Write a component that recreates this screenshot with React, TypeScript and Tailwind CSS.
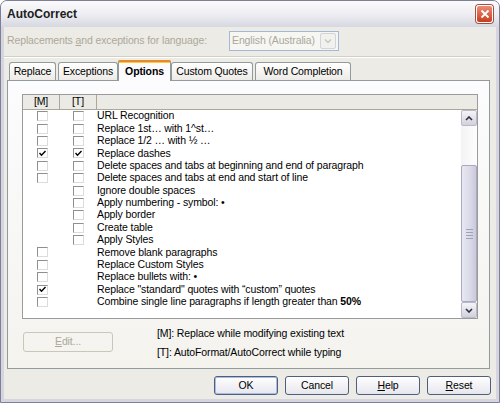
import React from 'react';

type Row = { m?: boolean; t?: boolean; label: React.ReactNode };

const rows: Row[] = [
  { m: false, t: false, label: 'URL Recognition' },
  { m: false, t: false, label: 'Replace 1st… with 1^st…' },
  { m: false, t: false, label: 'Replace 1/2 … with ½ …' },
  { m: true, t: true, label: 'Replace dashes' },
  { m: false, t: false, label: 'Delete spaces and tabs at beginning and end of paragraph' },
  { m: false, t: false, label: 'Delete spaces and tabs at end and start of line' },
  { t: false, label: 'Ignore double spaces' },
  { t: false, label: 'Apply numbering - symbol: •' },
  { t: false, label: 'Apply border' },
  { t: false, label: 'Create table' },
  { t: false, label: 'Apply Styles' },
  { m: false, label: 'Remove blank paragraphs' },
  { m: false, label: 'Replace Custom Styles' },
  { m: false, label: 'Replace bullets with: •' },
  { m: true, label: 'Replace "standard" quotes with “custom” quotes' },
  { m: false, label: <>Combine single line paragraphs if length greater than <b>50%</b></> },
];

function Check({ checked }: { checked: boolean }) {
  return (
    <span className="w-[11px] h-[10px] border border-t-[#8e8f8f] border-l-[#8e8f8f] border-r-[#dcdcdc] border-b-[#dcdcdc] bg-white flex items-center justify-center">
      {checked && (
        <svg width="7" height="7" viewBox="0 0 7 7">
          <path d="M0.5 3 L2.5 5.2 L6.5 1" stroke="#000" strokeWidth="1.4" fill="none" />
        </svg>
      )}
    </span>
  );
}

function Tab({ label, w, active, ml }: { label: string; w: string; active?: boolean; ml?: string }) {
  if (active) {
    return (
      <div className={`${w} h-[21px] -mb-px relative z-10 bg-[#fcfcfe] border border-b-0 border-[#919b9c] rounded-t-[3px] flex flex-col`}>
        <div className="h-[2px] bg-[#e68b2c] rounded-t-[2px] -mx-px -mt-px" />
        <div className="h-px bg-[#ffc83c]" />
        <div className="flex-1 flex items-center justify-center font-bold">{label}</div>
      </div>
    );
  }
  return (
    <div className={`${w} ${ml ?? ''} h-[18px] bg-gradient-to-b from-white to-[#ecebe6] border border-b-0 border-[#919b9c] rounded-t-[3px] flex items-center justify-center`}>
      {label}
    </div>
  );
}

function Btn({ children, isDefault }: { children: React.ReactNode; isDefault?: boolean }) {
  return (
    <div className={`w-[64px] h-[19px] rounded-[3px] border border-[#4f5e7c] bg-gradient-to-b from-white to-[#e6e6ee] flex items-center justify-center ${isDefault ? 'shadow-[inset_0_0_0_1px_#a9bde3]' : ''}`}>
      {children}
    </div>
  );
}

export default function App() {
  return (
    <div className="w-[500px] h-[403px] flex flex-col bg-[#d5d5e0] border border-[#7e7e96] rounded-t-[7px] overflow-hidden text-[10.5px] tracking-[-0.12px] text-black whitespace-nowrap" style={{ fontFamily: '"Liberation Sans", Arial, sans-serif' }}>
      {/* Title bar */}
      <div className="h-[26px] shrink-0 bg-gradient-to-b from-[#fbfbfc] via-[#eeeef3] to-[#d7d7e1] flex items-center pl-[6px] pr-[6px]">
        <span className="font-bold text-[12px] tracking-normal text-[#202020]">AutoCorrect</span>
        <div className="ml-auto w-[17px] h-[18px] rounded-[3px] border border-white bg-gradient-to-b from-[#ec8c74] to-[#c8391a] flex items-center justify-center shadow-[0_0_0_1px_#a05040]">
          <svg width="10" height="10" viewBox="0 0 10 10">
            <path d="M1.5 1.5 L8.5 8.5 M8.5 1.5 L1.5 8.5" stroke="#fff" strokeWidth="1.8" />
          </svg>
        </div>
      </div>

      {/* Body */}
      <div className="flex-1 mx-[3px] mb-[3px] bg-[#ecebe6] flex flex-col pl-[3px] pr-[5px]">
        {/* Language row */}
        <div className="mt-[4px] h-[20px] flex items-center">
          <span className="w-[222px] text-[#aca899]">
            Replacements <span className="underline">a</span>nd exceptions for language:
          </span>
          <div className="w-[110px] h-[20px] border border-[#a6b8d4] bg-[#f6f6f3] flex items-center pl-[2px] pr-[2px]">
            <span className="flex-1 text-[#aca899]">English (Australia)</span>
            <div className="w-[16px] h-[16px] border border-[#d3d3d8] bg-[#f1f1ef] rounded-[2px] flex items-center justify-center">
              <svg width="8" height="6" viewBox="0 0 8 6">
                <path d="M1 1.5 L4 4.5 L7 1.5" stroke="#c9c7ba" strokeWidth="1.5" fill="none" />
              </svg>
            </div>
          </div>
        </div>

        {/* Separator */}
        <div className="mt-[5px] h-[2px] border-t border-[#d0d0c4] border-b border-b-white -ml-[3px]" />

        {/* Tabs */}
        <div className="mt-[1px] h-[21px] flex items-end pl-[2px]">
          <Tab label="Replace" w="w-[47px]" />
          <Tab label="Exceptions" w="w-[60px]" ml="ml-[2px]" />
          <Tab label="Options" w="w-[53px]" active />
          <Tab label="Custom Quotes" w="w-[82px]" />
          <Tab label="Word Completion" w="w-[96px]" ml="ml-[2px]" />
        </div>

        {/* Tab page */}
        <div className="h-[289px] w-[483px] border border-[#919b9c] bg-gradient-to-b from-[#fcfcfe] to-[#f4f3ee] flex flex-col pl-[14px]">
          {/* List box */}
          <div className="mt-[13px] w-[456px] h-[225px] border border-[#9b9b9b] bg-white flex flex-col">
            <div className="h-[15px] shrink-0 flex bg-[#ebeae5] border-b border-[#aca899]">
              <div className="w-[37px] border-r border-[#aca899] flex items-center justify-center">[M]</div>
              <div className="w-[37px] border-r border-[#aca899] flex items-center justify-center">[T]</div>
              <div className="flex-1" />
            </div>
            <div className="flex-1 flex min-h-0">
              <div className="flex-1 overflow-hidden">
                {rows.map((r, i) => (
                  <div key={i} className="h-[12.4px] flex items-center">
                    <div className="w-[37px] pl-[14px] flex">{r.m !== undefined && <Check checked={r.m} />}</div>
                    <div className="w-[37px] pl-[13px] flex">{r.t !== undefined && <Check checked={r.t} />}</div>
                    <span>{r.label}</span>
                  </div>
                ))}
              </div>
              {/* Scrollbar */}
              <div className="w-[16px] flex flex-col bg-gradient-to-r from-[#f3f3f5] to-[#fdfdfd]">
                <div className="h-[16px] rounded-[2px] border border-[#b9b9cc] bg-gradient-to-b from-[#f4f4f8] to-[#d1d1de] flex items-center justify-center">
                  <svg width="8" height="5" viewBox="0 0 8 5">
                    <path d="M1 4 L4 1 L7 4" stroke="#2f2f3f" strokeWidth="1.6" fill="none" />
                  </svg>
                </div>
                <div className="h-[39px]" />
                <div className="flex-1 rounded-[2px] border border-[#a9a9c0] bg-gradient-to-r from-[#e8e8f2] via-[#dcdcea] to-[#c9c9db] flex flex-col items-center justify-center gap-[2px]">
                  <div className="w-[7px] h-px bg-[#a0a0b8]" />
                  <div className="w-[7px] h-px bg-[#a0a0b8]" />
                  <div className="w-[7px] h-px bg-[#a0a0b8]" />
                  <div className="w-[7px] h-px bg-[#a0a0b8]" />
                </div>
                <div className="h-[16px] rounded-[2px] border border-[#b9b9cc] bg-gradient-to-b from-[#f4f4f8] to-[#d1d1de] flex items-center justify-center">
                  <svg width="8" height="5" viewBox="0 0 8 5">
                    <path d="M1 1 L4 4 L7 1" stroke="#2f2f3f" strokeWidth="1.6" fill="none" />
                  </svg>
                </div>
              </div>
            </div>
          </div>

          {/* Edit + legend */}
          <div className="mt-[8px] flex">
            <div className="mt-[5px] ml-[1px] w-[90px] h-[20px] rounded-[3px] border border-[#c9c7ba] flex items-center justify-center text-[#aca899]">
              <span><span className="underline">E</span>dit...</span>
            </div>
            <div className="ml-[44px] flex flex-col gap-[7px]">
              <div className="h-[12px] leading-[12px]">[M]: Replace while modifying existing text</div>
              <div className="h-[12px] leading-[12px]">[T]: AutoFormat/AutoCorrect while typing</div>
            </div>
          </div>
        </div>

        {/* Buttons */}
        <div className="mt-[7px] flex justify-end gap-[7px]">
          <Btn isDefault>OK</Btn>
          <Btn>Cancel</Btn>
          <Btn><span><span className="underline">H</span>elp</span></Btn>
          <Btn><span><span className="underline">R</span>eset</span></Btn>
        </div>
      </div>
    </div>
  );
}
